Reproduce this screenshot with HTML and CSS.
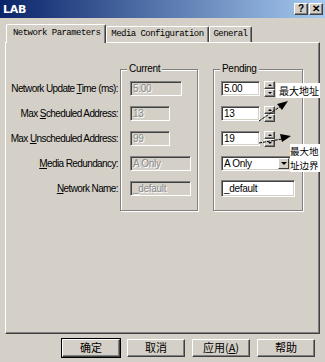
FILE: index.html
```html
<!DOCTYPE html>
<html>
<head>
<meta charset="utf-8">
<link rel="stylesheet" href="styles.css">
</head>
<body>
<div class="dialog">
  <div class="titlebar">
    <span class="title">LAB</span>
    <div class="tbtns"><span class="tbtn">?</span><span class="tbtn">&#x2715;</span></div>
  </div>
  <div class="tabs">
    <div class="tab active">Network Parameters</div>
    <div class="tab">Media Configuration</div>
    <div class="tab">General</div>
  </div>
  <div class="panel">
    <div class="form">
      <div class="labels">
        <div class="row"><span>Network Update <u>T</u>ime (ms):</span></div>
        <div class="row"><span>Max <u>S</u>cheduled Address:</span></div>
        <div class="row"><span>Max <u>U</u>nscheduled Address:</span></div>
        <div class="row"><span><u>M</u>edia Redundancy:</span></div>
        <div class="row"><span><u>N</u>etwork Name:</span></div>
      </div>
      <div class="group current">
        <span class="legend">Current</span>
        <div class="row"><span class="field dis w52">5.00</span></div>
        <div class="row"><span class="field dis w40">13</span></div>
        <div class="row"><span class="field dis w40">99</span></div>
        <div class="row"><span class="field dis w60">A Only</span></div>
        <div class="row"><span class="field dis w60">_default</span></div>
      </div>
      <div class="group pending">
        <span class="legend">Pending</span>
        <div class="row"><span class="field w38">5.00</span><span class="spin"><span class="sb up"></span><span class="sb dn"></span></span></div>
        <div class="row"><span class="field w38">13</span><span class="spin"><span class="sb up"></span><span class="sb dn"></span></span></div>
        <div class="row"><span class="field w38">19</span><span class="spin"><span class="sb up"></span><span class="sb dn"></span></span></div>
        <div class="row"><span class="field combo w71"><span class="ctext">A Only</span><span class="drop"></span></span></div>
        <div class="row"><span class="field w73 tall">_default</span></div>
      </div>
    </div>
  </div>
  <div class="buttons">
    <span class="btn def">确定</span>
    <span class="btn">取消</span>
    <span class="btn">应用(<u>A</u>)</span>
    <span class="btn">帮助</span>
  </div>
  <span class="note n1">最大地址</span>
  <span class="note n2">最大地<br>址边界</span>
  <svg class="arrows" width="325" height="362" viewBox="0 0 325 362">
    <line x1="259" y1="121" x2="281" y2="106" stroke="#000" stroke-width="1" stroke-dasharray="3 1"/>
    <polygon points="288,101 277,104 282,110" fill="#000"/>
    <line x1="259" y1="143" x2="282" y2="139" stroke="#000" stroke-width="1" stroke-dasharray="3 1"/>
    <polygon points="291,136 280,134 282,142" fill="#000"/>
  </svg>
</div>
</body>
</html>
```
FILE: styles.css
```css
* { box-sizing: border-box; }
html, body { margin: 0; padding: 0; background: #d4d0c8; }
.dialog {
  position: relative;
  width: 325px;
  height: 362px;
  background: #d4d0c8;
  font-family: "Liberation Sans", Arial, sans-serif;
  font-size: 10px;
  color: #000;
  overflow: hidden;
}
.titlebar {
  height: 18px;
  background: linear-gradient(to right, #0a246a, #a6caf0);
  display: flex;
  align-items: center;
  justify-content: space-between;
  padding: 0 2px 0 3px;
}
.title { color: #fff; font-weight: bold; font-size: 11px; font-family: "DejaVu Sans", sans-serif; letter-spacing: -0.3px; }
.tbtns { display: flex; gap: 1px; }
.tbtn {
  width: 14px; height: 12px;
  background: #d4d0c8;
  border: 1px solid; border-color: #fff #404040 #404040 #fff;
  box-shadow: inset -1px -1px 0 #808080;
  font-size: 10px; font-weight: bold; line-height: 10px; text-align: center;
}
.tabs {
  display: flex;
  align-items: flex-end;
  height: 18px;
  margin-top: 6px;
  padding-left: 6px;
}
.tab {
  height: 16px;
  padding: 0 4px;
  font-family: "Liberation Mono", "DejaVu Sans Mono", monospace;
  font-size: 9px;
  letter-spacing: -0.55px;
  line-height: 15px;
  background: #d4d0c8;
  border-top: 1px solid #fff;
  border-left: 1px solid #fff;
  border-right: 1px solid #404040;
  box-shadow: inset -1px 0 0 #808080;
  border-radius: 2px 2px 0 0;
  white-space: nowrap;
}
.tab.active {
  position: relative;
  z-index: 1;
  height: 19px;
  margin-bottom: -1px;
  padding: 0 5px 0 6px;
  line-height: 16px;
}
.panel {
  margin: 0 5px;
  height: 292px;
  border-top: 1px solid #fff;
  border-left: 1px solid #fff;
  border-right: 1px solid #404040;
  border-bottom: 1px solid #404040;
  box-shadow: inset -1px -1px 0 #808080;
}
.form {
  display: flex;
  align-items: flex-start;
  padding-top: 26px;
}
.labels {
  width: 114px;
  padding-top: 7px;
  letter-spacing: -0.6px;
}
.labels .row { justify-content: flex-end; padding-right: 2px; }
.row {
  height: 25px;
  display: flex;
  align-items: center;
  white-space: nowrap;
}
.group {
  position: relative;
  height: 142px;
  padding-top: 6px;
  border: 1px solid #808080;
  box-shadow: 1px 1px 0 #fff, inset 1px 1px 0 #fff;
}
.current { width: 78px; padding-left: 9px; }
.pending { width: 90px; margin-left: 15px; padding-left: 7px; }
.legend {
  position: absolute;
  top: -7px;
  left: 6px;
  padding: 0 2px;
  background: #d4d0c8;
  line-height: 12px;
  letter-spacing: -0.3px;
}
.field {
  display: inline-block;
  height: 15px;
  line-height: 13px;
  padding-left: 2px;
  background: #fff;
  border: 1px solid;
  border-color: #808080 #fff #fff #808080;
  box-shadow: inset 1px 1px 0 #404040, inset -1px -1px 0 #d4d0c8;
  letter-spacing: -0.3px;
}
.field.tall { height: 17px; line-height: 15px; }
.field.dis {
  background: #d4d0c8;
  color: #8a8a8a;
  text-shadow: 1px 1px 0 #fff;
}
.w38 { width: 39px; }
.w40 { width: 40px; }
.w52 { width: 52px; }
.w60 { width: 61px; }
.w71 { width: 70px; }
.w73 { width: 74px; }
.combo { display: inline-flex; justify-content: space-between; padding-right: 1px; }
.ctext { line-height: 13px; }
.drop {
  position: relative;
  width: 11px;
  height: 11px;
  margin-top: 1px;
  background: #d4d0c8;
  border: 1px solid; border-color: #fff #404040 #404040 #fff;
}
.drop::after {
  content: "";
  position: absolute;
  left: 2px; top: 3px;
  border-left: 3px solid transparent;
  border-right: 3px solid transparent;
  border-top: 3px solid #000;
}
.spin {
  display: inline-flex;
  flex-direction: column;
  margin-left: 4px;
}
.sb {
  position: relative;
  width: 11px;
  height: 8px;
  background: #d4d0c8;
  border: 1px solid; border-color: #fff #404040 #404040 #fff;
  box-shadow: inset -1px -1px 0 #808080;
}
.sb::after {
  content: "";
  position: absolute;
  left: 3px;
  border-left: 2px solid transparent;
  border-right: 2px solid transparent;
}
.sb.up::after { top: 2px; border-bottom: 2px solid #000; }
.sb.dn::after { top: 2px; border-top: 2px solid #000; }
.buttons {
  display: flex;
  justify-content: flex-end;
  gap: 7px;
  padding-right: 10px;
  margin-top: 5px;
}
.btn {
  width: 58px;
  height: 18px;
  background: #d4d0c8;
  border: 1px solid; border-color: #fff #404040 #404040 #fff;
  box-shadow: inset -1px -1px 0 #808080;
  font-family: "Noto Sans CJK SC", "Liberation Sans", sans-serif;
  font-size: 11px;
  line-height: 15px;
  text-align: center;
}
.btn.def { outline: 1px solid #000; }
.note {
  position: absolute;
  background: #fff;
  font-family: "Noto Sans CJK SC", sans-serif;
  font-size: 10px;
  line-height: 13px;
  color: #000;
  white-space: nowrap;
}
.n1 { left: 276px; top: 83px; width: 44px; height: 15px; padding-left: 3px; line-height: 15px; }
.n2 { left: 290px; top: 144px; width: 30px; height: 28px; font-size: 9.5px; line-height: 14px; }
.arrows { position: absolute; left: 0; top: 0; pointer-events: none; }
```
